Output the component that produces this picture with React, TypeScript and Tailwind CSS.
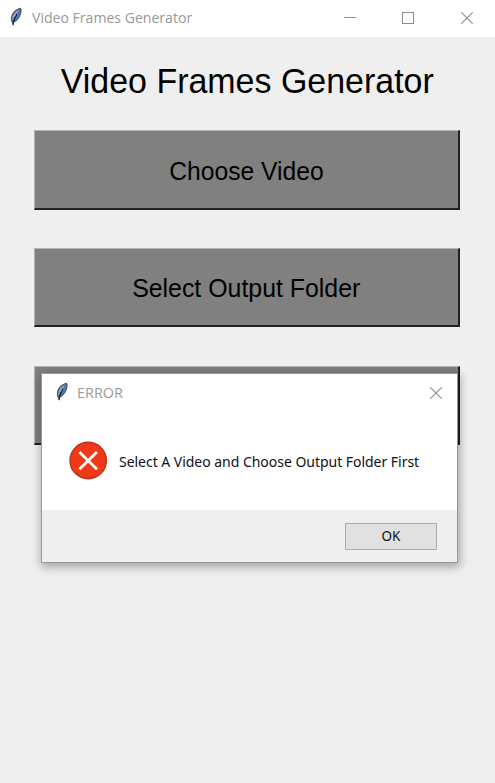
import React from "react";

function Feather() {
  return (
    <svg width="14" height="20" viewBox="0 0 14 20" className="block shrink-0">
      <path d="M11.600.8C8 1.200 3.400 5 2.300 9c-.7 2.700-.4 4.700.4 6.200L4.100 19l.9-3.500C9 13.600 11.600 9.500 12.400 5.500c.4-2.200.3-3.800-.8-4.700Z" fill="#50545c" />
      <path d="M10.800 2C7.500 3.500 4.300 6.500 3.400 10c-.4 1.600-.4 2.700 0 3.500L9.300 4.500Z" fill="#86aedd" />
      <path d="M11.200 2.200 4.800 14.400c3.200-1.700 5.700-5.200 6.500-8.800Z" fill="#3f86d8" />
      <path d="M7.500 8C6 11 4.800 13.500 4.100 18" fill="none" stroke="#18202c" strokeWidth="1" />
      <path d="m7.300 6.800.2 2.200m-2.300 1.200L5.800 12" stroke="#18202c" strokeWidth="1" />
    </svg>
  );
}

function CloseIcon() {
  return (
    <svg width="12" height="12" viewBox="0 0 12 12" className="block shrink-0" stroke="#8c8c8c" strokeWidth="1.100">
      <path d="m.3.300 11.400 11.400M11.700.3.300 11.700" />
    </svg>
  );
}

function MainButton({ children }: { children?: React.ReactNode }) {
  return (
    <button className="flex h-[79.400px] w-[426px] shrink-0 items-center justify-center border-t border-r-2 border-b-2 border-l border-t-[#b4b4b4] border-r-[#202020] border-b-[#202020] border-l-[#b4b4b4] bg-[#808080] pt-[3px] text-[26px] whitespace-nowrap text-black">
      {children}
    </button>
  );
}

export default function App() {
  return (
    <div className="relative flex h-[783px] w-[495px] flex-col overflow-hidden bg-[#efefef] font-['Liberation_Sans',Arial,sans-serif]">
      <header className="flex h-[37px] shrink-0 items-start bg-white pt-[7px] pl-[9px] font-['Open_Sans',sans-serif]">
        <Feather />
        <span className="ml-[9px] w-[312px] text-[15px] leading-[21px] whitespace-nowrap text-[#999]"><span className="inline-block origin-left scale-x-[0.938]">Video Frames Generator</span></span>
        <div className="mt-[10px] h-px w-3 shrink-0 bg-[#8c8c8c]" />
        <div className="mt-[5px] ml-[46px] size-3 shrink-0 border border-[#8c8c8c]" />
        <div className="mt-[5px] ml-[47px]"><CloseIcon /></div>
      </header>
      <main className="flex flex-col pl-[34px]">
        <h1 className="mt-[24px] mb-[29.400px] flex h-10 w-[426px] items-center justify-center text-[35px] leading-10 whitespace-nowrap text-black"><span className="scale-x-[0.970]">Video Frames Generator</span></h1>
        <div className="flex flex-col gap-[38.200px]">
          <MainButton><span className="scale-x-[0.948]">Choose Video</span></MainButton>
          <MainButton><span className="scale-x-[0.957]">Select Output Folder</span></MainButton>
          <MainButton />
        </div>
      </main>
      <section className="absolute top-[373px] left-[41px] flex h-[190px] w-[417px] flex-col border border-[#999] bg-white font-['Open_Sans',sans-serif] shadow-[1px_3px_9px_1px_rgba(0,0,0,0.32)]">
        <div className="flex h-[51px] items-start pt-[8px] pl-[13px]">
          <Feather />
          <span className="ml-[8px] w-[353px] text-[15px] leading-[21px] text-[#999]"><span className="inline-block origin-left scale-x-[0.960]">ERROR</span></span>
          <div className="mt-[5px]"><CloseIcon /></div>
        </div>
        <div className="flex h-[85px] items-start pl-[27px]">
          <svg width="39" height="39" viewBox="0 0 39 39" className="mt-[16px] block shrink-0">
            <circle cx="19.200" cy="19.500" r="18.200" fill="#f03a17" stroke="#b93420" strokeWidth="1.400" />
            <path d="m10.400 11 17.600 17.200M28 11 10.400 28.200" stroke="white" strokeWidth="2.800" />
          </svg>
          <span className="mt-[27px] ml-[11px] font-['Noto_Sans',sans-serif] text-[14px] leading-5 tracking-[-0.03px] whitespace-nowrap text-[#101018]">Select A Video and Choose Output Folder First</span>
        </div>
        <footer className="flex flex-1 justify-end bg-[#efefef] pt-[13px] pr-[20px]">
          <button className="flex h-[27px] w-[92px] items-center justify-center border border-[#adadad] bg-[#e1e1e1] pt-px font-['Noto_Sans',sans-serif] text-[13.500px] leading-none text-[#101018]">OK</button>
        </footer>
      </section>
    </div>
  );
}
